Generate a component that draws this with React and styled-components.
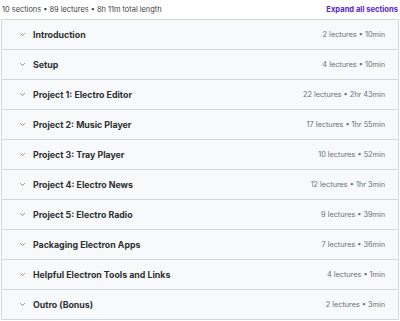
import React from "react";
import styled, { createGlobalStyle } from "styled-components";

const Global = createGlobalStyle`
  html, body { margin: 0; padding: 0; background: #fff; }
  body { width: 400px; font-family: Inter, "Noto Sans", sans-serif; color: #2d2f31; }
`;

const Page = styled.div`
  display: flex;
  flex-direction: column;
  width: 400px;
`;

const Header = styled.div`
  display: flex;
  align-items: center;
  justify-content: space-between;
  height: 18px;
  padding: 0 2px 1px 2px;
`;

const Summary = styled.span`
  font-size: 7.4px;
  color: #3e4143;
`;

const ExpandLink = styled.button`
  border: 0;
  background: none;
  padding: 0;
  font-family: inherit;
  font-size: 7.6px;
  font-weight: 700;
  color: #5624d0;
  cursor: pointer;
`;

const Sections = styled.div`
  margin: 0 1px;
  border: 1px solid #d1d7dc;
  border-bottom: 0;
`;

const Row = styled.div`
  display: flex;
  align-items: center;
  height: 29px;
  border-bottom: 1px solid #d1d7dc;
  background: #f7f9fa;
  padding: 0 13px 0 17px;
`;

const Chevron = styled.svg`
  width: 7px;
  height: 7px;
  flex: none;
  margin-right: 7px;
`;

const Title = styled.span`
  flex: 1;
  font-size: 8.8px;
  font-weight: 700;
  color: #2d2f31;
`;

const Meta = styled.span`
  font-size: 7.3px;
  color: #6a6f73;
`;

const sections = [
  ["Introduction", "2 lectures • 10min"],
  ["Setup", "4 lectures • 10min"],
  ["Project 1: Electro Editor", "22 lectures • 2hr 43min"],
  ["Project 2: Music Player", "17 lectures • 1hr 55min"],
  ["Project 3: Tray Player", "10 lectures • 52min"],
  ["Project 4: Electro News", "12 lectures • 1hr 3min"],
  ["Project 5: Electro Radio", "9 lectures • 39min"],
  ["Packaging Electron Apps", "7 lectures • 36min"],
  ["Helpful Electron Tools and Links", "4 lectures • 1min"],
  ["Outro (Bonus)", "2 lectures • 3min"],
];

export default function App() {
  return (
    <Page>
      <Global />
      <Header>
        <Summary>10 sections • 89 lectures • 8h 11m total length</Summary>
        <ExpandLink>Expand all sections</ExpandLink>
      </Header>
      <Sections>
        {sections.map(([t, m]) => (
          <Row key={t}>
            <Chevron viewBox="0 0 10 10">
              <path d="M2 3.5 L5 6.5 L8 3.5" fill="none" stroke="#6a6f73" strokeWidth="1.1" strokeLinecap="round" strokeLinejoin="round" />
            </Chevron>
            <Title>{t}</Title>
            <Meta>{m}</Meta>
          </Row>
        ))}
      </Sections>
    </Page>
  );
}
